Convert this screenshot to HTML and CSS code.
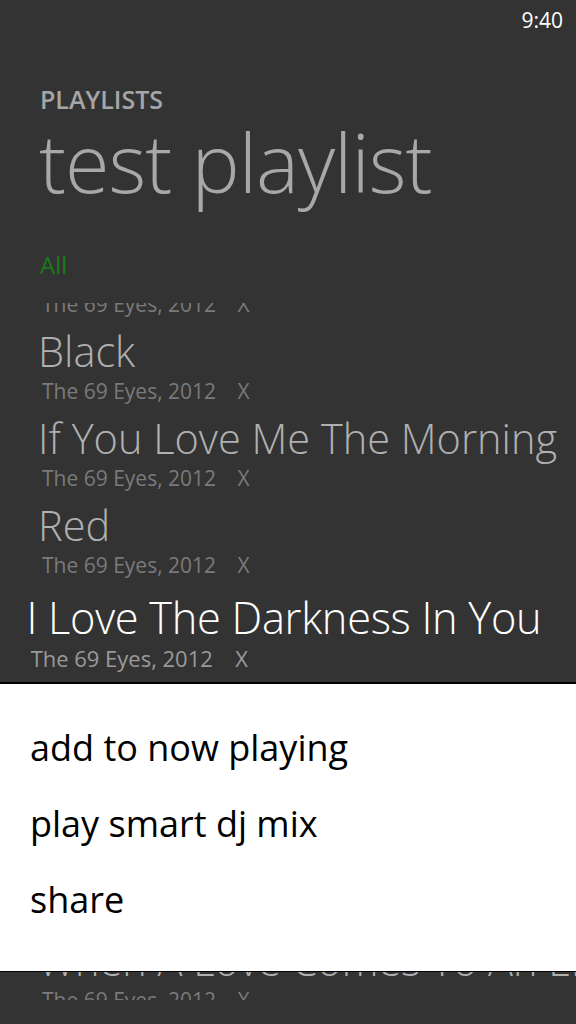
FILE: index.html
```html
<!DOCTYPE html>
<html lang="en">
<head>
<meta charset="utf-8">
<meta name="viewport" content="width=device-width, initial-scale=1">
<title>test playlist</title>
<link rel="stylesheet" href="styles.css">
</head>
<body>
<div class="phone">
	<div class="status-bar">9:40</div>
	<div class="header">
		<div class="app-title">PLAYLISTS</div>
		<div class="page-title">test playlist</div>
	</div>
	<div class="pivot">All</div>
	<div class="list-view">
		<ul class="songs">
			<li class="song">
				<div class="song-title">Crawling Up The Walls</div>
				<div class="song-info">The 69 Eyes, 2012 <span class="album">X</span></div>
			</li>
			<li class="song">
				<div class="song-title">Black</div>
				<div class="song-info">The 69 Eyes, 2012 <span class="album">X</span></div>
			</li>
			<li class="song">
				<div class="song-title">If You Love Me The Morning</div>
				<div class="song-info">The 69 Eyes, 2012 <span class="album">X</span></div>
			</li>
			<li class="song">
				<div class="song-title">Red</div>
				<div class="song-info">The 69 Eyes, 2012 <span class="album">X</span></div>
			</li>
			<li class="song selected">
				<div class="song-title">I Love The Darkness In You</div>
				<div class="song-info">The 69 Eyes, 2012 <span class="album">X</span></div>
			</li>
			<li class="song">
				<div class="song-title">Borderline</div>
				<div class="song-info">The 69 Eyes, 2012 <span class="album">X</span></div>
			</li>
			<li class="song">
				<div class="song-title">Kiss Me Undead</div>
				<div class="song-info">The 69 Eyes, 2012 <span class="album">X</span></div>
			</li>
			<li class="song">
				<div class="song-title">Rosary Blue</div>
				<div class="song-info">The 69 Eyes, 2012 <span class="album">X</span></div>
			</li>
			<li class="song">
				<div class="song-title">When A Love Comes To An End</div>
				<div class="song-info">The 69 Eyes, 2012 <span class="album">X</span></div>
			</li>
		</ul>
	</div>

	<!-- context menu for the held item -->
	<div class="context-menu">
		<div class="menu-item">add to now playing</div>
		<div class="menu-item">play smart dj mix</div>
		<div class="menu-item">share</div>
	</div>
</div>
</body>
</html>
```

FILE: styles.css
```css
html, body {
	margin: 0;
	padding: 0;
	background: #333333;
}
body {
	font-family: "Open Sans", "Noto Sans", sans-serif;
	color: #ffffff;
}
.phone {
	position: relative;
	width: 576px;
	height: 1024px;
	overflow: hidden;
}
.status-bar {
	height: 40px;
	line-height: 40px;
	padding-right: 13px;
	text-align: right;
	font-size: 21px;
}
.header {
	padding-left: 40px;
}
.app-title {
	margin-top: 44px;
	font-size: 25px;
	font-weight: 600;
	line-height: 30px;
	color: #a6a6a6;
}
.page-title {
	margin-top: -2px;
	margin-left: -1px;
	font-size: 81px;
	font-weight: 300;
	line-height: 100px;
	letter-spacing: -1px;
	color: #a8a8a8;
}
.pivot {
	margin-top: 38px;
	margin-bottom: 23px;
	padding-left: 40px;
	font-size: 24px;
	line-height: 30px;
	color: #1b7a1b;
}
.list-view {
	height: 697px;
	overflow: hidden;
}
.songs {
	list-style: none;
	margin: -65px 0 0 0;
	padding: 0;
}
.song {
	height: 87px;
	padding-left: 40px;
}
.song-title {
	margin-left: -2px;
	font-size: 41.5px;
	font-weight: 300;
	line-height: 52px;
	color: #b0b0b0;
	white-space: nowrap;
}
.song-info {
	margin-left: 2px;
	font-size: 21px;
	line-height: 28px;
	color: #7a7a7a;
	white-space: nowrap;
}
.album {
	margin-left: 16px;
}
.selected {
	transform: translateY(6px) scale(1.046);
	transform-origin: 288px 50%;
}
.selected .song-title {
	letter-spacing: -0.3px;
	color: #ffffff;
}
.selected .song-info {
	color: #9a9a9a;
}
.context-menu {
	position: absolute;
	left: 0;
	right: 0;
	top: 682px;
	height: 290px;
	padding-top: 26px;
	box-sizing: border-box;
	background: #ffffff;
	border-top: 2px solid #000000;
	border-bottom: 1px solid #000000;
}
.menu-item {
	padding-left: 30px;
	font-size: 36px;
	line-height: 76px;
	color: #000000;
}
```
